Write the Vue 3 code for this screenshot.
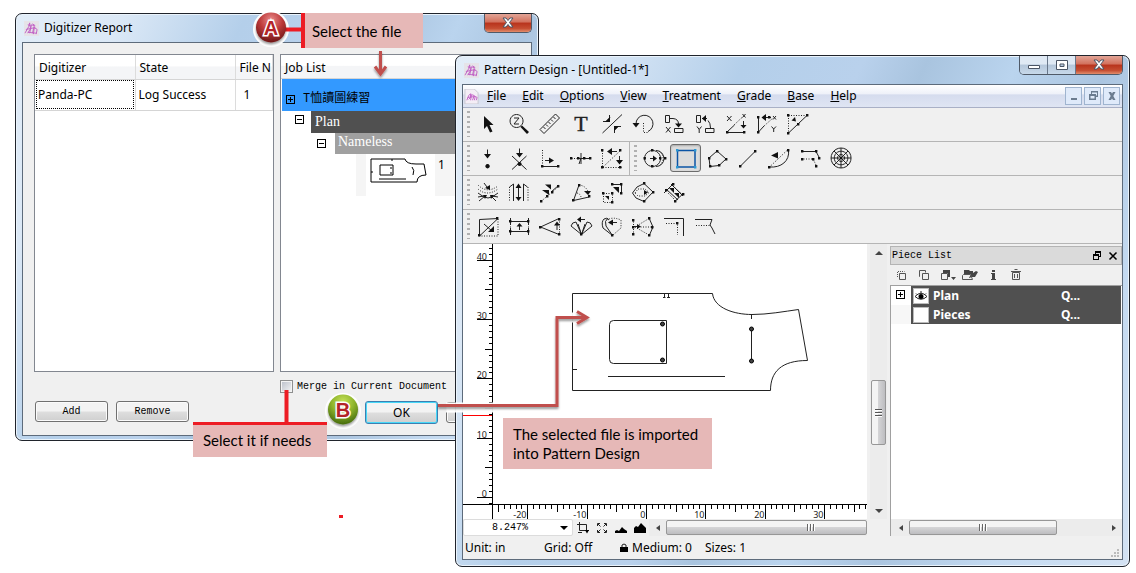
<script setup>
const dot = (x, y) => `M${x - 1} ${y - 1}h2.4v2.4h-2.4z`
const dots = (...points) => points.map(([x, y]) => dot(x, y)).join('')

/* Each glyph: s = solid strokes, d = dotted strokes, f = filled shapes, t = letters */
const glyphs = {
  select: { f: 'M8 4V17L11 14L14 20.5L16.500 19.500L13.500 13H17.500Z' },
  zoom: { s: 'M9.500 2.500a6.500 6.500 0 1 0 .1 0zM7 6h5L7 12h5', f: 'M13.500 15L15 13.500L22 20L20 22Z' },
  ruler: { s: 'M2 17.500L17.500 2L21.500 6L6 21.500ZM5.500 15l2 2M8 12.500l2 2M10.500 10l2 2M13 7.500l2 2M15.500 5l2 2' },
  text: { t: [['T', 12, 19, 22]] },
  corners: { s: 'M2.500 21L22 2.500M3 9.500H9.500V3M14.500 21V14.500H21M6 9.500l4-4M14.500 18l4-4', f: 'M5 10L10 5V10ZM14 14h5l-5 5Z' },
  rotate: { s: 'M5 12A8.500 8.500 0 1 1 17 19.500', d: 'M12.500 11V20.500H17', f: 'M1.500 11H8.500L5 15.500Z' },
  flipX: { s: 'M3.500 3.500h4v7h-4zM8 6.500h3Q16.500 7 16.500 12M12.500 16.500h8.500v4h-8.500zM4 15l4.500 5.500M8.500 15L4 20.500', f: 'M13 11.500h7L16.500 15.500Z' },
  flipY: { s: 'M3.500 3.500h4v7h-4zM9 6.500h5M15 8.500Q17.500 11 17.500 16M12.500 16.500h8.500v4h-8.500zM4 14.500l2.200 3M8.500 14.500L6.200 17.500V21', f: 'M9 6.500l4-3.500v7z' },
  scaleX: { s: 'M3 20.500H20M3 4l4.500 5M7.500 4L3 9M19.500 9V14M18.500 2l3 3.500M21.500 2l-3 3.500M3 20L10.500 13', d: 'M10 13L18 5.500', f: dots([3, 20], [20, 20]) + 'M16.500 13h6L19.500 16.500Z' },
  scaleY: { s: 'M3.500 5V20M7 5.500H16M16.500 14.500l2.200 2.500M21 14.500l-2.300 2.500V20M18 4l3 3.500M21 4l-3 3.500M3.500 20L9 14', d: 'M9 14L18 6', f: dots([3, 5], [3, 20], [14, 5]) + 'M6.500 5.500l4.500-3.500v7z' },
  scaleXY: { s: 'M2.500 21L21.500 3', d: 'M2.500 3.500H21M2.500 3.500V21', f: dots([2, 3], [21, 3], [2, 21], [12, 12]) + 'M10 9.500L5.500 8.500L9 5Z' },
  point: { s: 'M11.500 3.500V9', f: 'M8 8h7l-3.500 4.500zM11.500 18a2.200 2.200 0 1 0 .1 0z' },
  cross: { s: 'M12.500 2.500V8M5 10L19.500 23.500M19.500 10L5 23.500', f: 'M9 7h7l-3.500 4.500zM12.500 16a2 2 0 1 0 .1 0z' },
  axis: { s: 'M4.500 20.500H21M7 14.500h5', d: 'M4.500 4V20', f: dots([4, 20], [20, 20]) + 'M11 11.500v6l5-3z' },
  divide: { s: 'M9 12.500H22M10 18Q13 12 12 7M12 12v6', d: 'M2.500 12.500H9', f: dots([2, 12], [9, 12], [15, 12], [21, 12]) },
  box: { s: 'M9 5.500h8M19.500 10v5', d: 'M2.500 4.500V21.500H21.500M3 21L21 4', f: dots([2, 4], [2, 21], [20, 21], [20, 4]) + 'M7 5.500l5-3.500v7zM16 14h7l-3.500 4.500z' },
  circle: { s: 'M9.500 4.500a8 8 0 1 0 .1 0zM13 4.500A8 8 0 0 1 13 20.500M7 12.500h4', d: 'M16 5A9 9 0 0 1 16 20', f: dots([9, 4], [9, 20], [1.500, 12], [17, 12], [22, 12]) + 'M10 9.500v6l4-3z' },
  rect: { s: 'M3.500 4.500H21V21H3.500Z', f: dots([3, 4], [21, 4], [3, 21], [21, 21]), c: 'blue' },
  polygon: { s: 'M4 12L12 5L21 13L14 19.500L5 20.500Z', f: dots([4, 12], [12, 5], [21, 13], [14, 19], [5, 20]) },
  line: { s: 'M4 20.500L19.500 5', f: dots([4, 20], [19, 5]) },
  curve: { s: 'M2.500 21C14 22 23 15 21.500 4', d: 'M2.500 21L21 3.500', f: dots([2, 21], [21, 4]) + 'M4 9.500L11 6V12.500Z' },
  parallel: { s: 'M4 5.500H18L21.500 12', d: 'M3 13H15L18.500 20', f: dots([4, 5], [18, 5], [21, 12], [4, 13], [15, 13], [18, 20]) },
  spiral: { s: 'M12 2a10 10 0 1 0 .1 0zM12 5.200a6.800 6.800 0 1 0 .1 0zM12 8.500a3.500 3.500 0 1 0 .1 0zM12 2V22M2 12H22M5 5L19 19M19 5L5 19', f: 'M11 11h2v2h-2z' },
  spread: { s: 'M2 13Q8 18 12 18T22 13M8 3l3 4M3 21l6-5M20 21l-5-5M2 17l6-1M22 17l-6-1', d: 'M2 5Q11 14 22 6M2 9Q11 17 22 9', f: 'M9 8l5-3v5zM7 15h4l-2 4zM14 15h4l-3 4z' },
  pleats: { s: 'M11.500 5V20M6.500 4V21M16.500 4V21M2.500 7l4-3M16.500 4l4 3', d: 'M2.500 7V22M21 7V22', f: 'M8.500 8h6l-3-4.500zM8.500 17h6l-3 4z' },
  notch: { s: 'M13 12l8-7', d: 'M3.500 21L20 7', f: dots([3, 21], [9, 16], [14, 12], [20, 6]) + 'M7 4.500h6v5zM4 10h7v5z' },
  dart: { s: 'M4.500 20.500L10 5M4.500 20.500L20 17', d: 'M10 5Q19 6 20 16M8 13q4 1 4 5', f: dots([4, 20], [10, 5], [20, 16]) + 'M15 11h7l-3 4z' },
  move: { s: 'M12 4.500H21.500V13', d: 'M3.500 13.500h9v9h-9z', f: dots([3, 13], [12, 13], [12, 22], [12, 4], [21, 4], [21, 13]) + 'M13 7h6v6zM5 16h4v4z' },
  contour: { s: 'M1.500 13L6 7L13 3.500L22 12L13 21.500L5 18Z', d: 'M4 13L7 9H14L18 12.500L14 16H7Z', f: dots([13, 3], [22, 12], [13, 21]) + 'M13 10v5l4-2.500z' },
  hatch: { s: 'M2 13L12 3M12 22L22 13M4 9L16 20M9 4L21 16', d: 'M6 13l7 7M11 6l9 8', f: dots([4, 10], [11, 4], [21, 14], [13, 21]) + 'M7 8h5v5zM12 13h5v5z' },
  square: { s: 'M3.500 22V5.500L22 4.500M3.500 22L22 4.500M8 10l8 7', d: 'M22 5V22H4', f: 'M12 18h6v-6z' + dots([3, 21], [21, 4]) },
  width: { s: 'M3 7.500H22M3 17.500H22M3.500 4v6M21.500 4v6M3.500 14v7M21.500 14v7M12.500 12v4', d: 'M3.500 10v4M21.500 10v4', f: dots([3, 7], [21, 7], [3, 17], [21, 17]) + 'M9.500 12.500h6l-3-3.500z' },
  cone: { s: 'M2.500 13L21 4.500M2.500 13L21 20.500M19 10v6', d: 'M21.500 5V20.500', f: dots([2, 13], [21, 5], [21, 20]) + 'M16 11.500h6l-3-4z' },
  fan: { s: 'M12.500 20.500L2 12Q3 8 7 8L12.500 20.500L18 8Q22 8 23 12ZM12.500 20.500L9 10M12.500 20.500L16 10M10 5.500h6', f: dots([12, 20]) + 'M8 5.500l4-3v6z' },
  petal: { s: 'M12.500 21.500L3 14Q1 8 4 5Q7 3 9 6M12.500 21.500L6 12Q4 7 8 4M11 8.500h6', d: 'M9 5Q14 3 21 6V14L13 21', f: dots([12, 21]) + 'M8 8.500l5-3v6z' },
  mirror: { s: 'M18 4L22 13L18 22M3 12.500h3', d: 'M2.500 5V21M4 13L18 4.500M4 13L18 21M7 13H21', f: dots([2, 6], [2, 13], [2, 20], [18, 4], [21, 13], [18, 21]) + 'M6 10v5l4-2.500z' },
  seam: { s: 'M2 4.500H21.500V22', d: 'M4 9.500H15.500V21', f: dots([15, 9]) },
  edge: { s: 'M2 5.500H19L17 11L19 14L22 20', d: 'M3 11.500H17' },
}

const rows = [
  [['select', 'zoom', 'ruler', 'text', 'corners', 'rotate', 'flipX', 'flipY', 'scaleX', 'scaleY', 'scaleXY']],
  [['point', 'cross', 'axis', 'divide', 'box'], ['circle', 'rect', 'polygon', 'line', 'curve', 'parallel', 'spiral']],
  [['spread', 'pleats', 'notch', 'dart', 'move', 'contour', 'hatch']],
  [['square', 'width', 'cone', 'fan', 'petal', 'mirror', 'seam', 'edge']],
]

const menus = ['File', 'Edit', 'Options', 'View', 'Treatment', 'Grade', 'Base', 'Help']

/* Ruler ticks: one per inch, longer at 5, labelled at 10 */
const unit = 5.93
const vTicks = []
for (let v = -1; v <= 42; v++) vTicks.push({ v, y: Math.round(252 - v * unit) + 0.5 })
const hTicks = []
for (let v = -25; v <= 140; v++) hTicks.push({ v, x: Math.round(183 + v * unit) + 0.5 })
const hLabels = hTicks.filter((t) => t.v % 10 === 0 && t.v < 40)
const tick = (v, one, five, ten) => (v % 10 === 0 ? ten : v % 5 === 0 ? five : one)
</script>

<template>
  <main class="desktop">
    <section class="win digitizer">
      <header class="title">
        <svg class="logo" viewBox="0 0 16 16"><rect width="16" height="16" fill="#e6e3e8" /><path d="M1 13l4-7 1-4 1 6-3 5M6 13l2-9 3 1-2 8M10 14l1-7 3 2-1 5M2 9l10-2M4 12l9 1M4 4l3 1M9 3l3 2" /></svg>
        <h1>Digitizer Report</h1>
        <div class="caption"><button class="close" aria-label="Close"><svg viewBox="0 0 14 12"><path d="M2 1h3l2 2.500 2-2.500h3l-3.500 4.500 3.500 4.500h-3l-2-2.500-2 2.500h-3l3.500-4.500z" /></svg></button></div>
      </header>
      <div class="client report">
        <div class="panel">
          <table>
            <thead><tr><th>Digitizer</th><th>State</th><th>File N</th></tr></thead>
            <tbody><tr><td class="focus">Panda-PC</td><td>Log Success</td><td class="num">1</td></tr></tbody>
          </table>
        </div>
        <div class="panel jobs">
          <div class="jobhead">Job List</div>
          <div class="job file"><i class="exp plus"></i><span>T恤讀圖練習</span></div>
          <div class="job plan"><i class="exp"></i><span>Plan</span></div>
          <div class="job size"><i class="exp"></i><span>Nameless</span></div>
          <div class="job piece">
            <svg viewBox="0 0 58 26"><path d="M1 1H35Q36 6 46 6H54L56 17Q47 17 47 24H1ZM10 7H23V17H10ZM9 21H36M42 9Q45 12 43 17M22 1v2M1 14h2M21 9v2M21 14v2" /></svg>
            <span>1</span>
          </div>
        </div>
        <div class="buttons left"><button>Add</button><button>Remove</button></div>
        <div class="confirm">
          <label><input type="checkbox" />Merge in Current Document</label>
          <div class="buttons right"><button class="ok">OK</button><button aria-label="Cancel"></button></div>
        </div>
      </div>
    </section>

    <section class="win pattern">
      <header class="title">
        <svg class="logo" viewBox="0 0 16 16"><rect width="16" height="16" fill="#e6e3e8" /><path d="M1 13l4-7 1-4 1 6-3 5M6 13l2-9 3 1-2 8M10 14l1-7 3 2-1 5M2 9l10-2M4 12l9 1M4 4l3 1M9 3l3 2" /></svg>
        <h1>Pattern Design - [Untitled-1*]</h1>
        <div class="caption">
          <button aria-label="Minimize"><svg viewBox="0 0 14 12"><path d="M1.500 6.500h11v3h-11z" /></svg></button>
          <button aria-label="Maximize"><svg viewBox="0 0 14 12"><path fill-rule="evenodd" d="M1.500 1.500h11v9h-11zM5 5h4v2.500h-4z" /></svg></button>
          <button class="close" aria-label="Close"><svg viewBox="0 0 14 12"><path d="M2 1h3l2 2.500 2-2.500h3l-3.500 4.500 3.500 4.500h-3l-2-2.500-2 2.500h-3l3.500-4.500z" /></svg></button>
        </div>
      </header>
      <div class="client">
        <nav class="menubar">
          <svg class="logo doc" viewBox="0 0 16 16"><path class="sheet" d="M1 0h10l4 4v12H1z" /><path d="M3 12l2-5 2-2 0 4-2 2M7 12l1-6 3 1-2 5M11 12l1-4 2 1-1 3M4 9l8-1" /></svg>
          <button v-for="m in menus" :key="m"><u>{{ m[0] }}</u>{{ m.slice(1) }}</button>
          <div class="mdi">
            <button aria-label="Minimize document"><svg viewBox="0 0 12 12"><path d="M3 8h6v2H3z" /></svg></button>
            <button aria-label="Restore document"><svg viewBox="0 0 12 12"><path fill-rule="evenodd" d="M4 1h7v6H9v3H2V4h2zM5 2.500V4h4v1.500h1v-3zM3.500 6v2.500h4V6z" /></svg></button>
            <button aria-label="Close document"><svg viewBox="0 0 12 12"><path d="M2.500 2h2.500l1 1.500 1-1.500h2.500l-2.200 4 2.200 4h-2.500l-1-1.500-1 1.500h-2.500l2.200-4z" /></svg></button>
          </div>
        </nav>
        <div v-for="(bars, r) in rows" :key="r" class="toolrow">
          <div v-for="(bar, b) in bars" :key="b" class="toolbar">
            <i class="grip"></i>
            <button v-for="name in bar" :key="name" :aria-label="name" :class="{ active: name === 'rect' }">
              <svg viewBox="0 0 24 24" :class="glyphs[name].c">
                <path v-if="glyphs[name].d" class="d" :d="glyphs[name].d" />
                <path v-if="glyphs[name].s" class="s" :d="glyphs[name].s" />
                <path v-if="glyphs[name].f" class="f" :d="glyphs[name].f" />
                <text v-for="t in glyphs[name].t" :key="t[0]" :x="t[1]" :y="t[2]" :font-size="t[3]" text-anchor="middle">{{ t[0] }}</text>
              </svg>
            </button>
          </div>
        </div>

        <div class="work">
          <div class="view">
            <svg class="canvas">
              <g transform="translate(0 1)">
                <path class="axis" d="M29.500 -1V260" />
                <g v-for="t in vTicks" :key="t.v">
                  <path class="axis" :d="`M${tick(t.v, 26, 22, 14)} ${t.y}H30`" />
                  <text v-if="t.v % 10 === 0" x="24" :y="t.y - 1" text-anchor="end">{{ t.v }}</text>
                </g>
                <path class="red" d="M0 170.500H29" />
                <g class="garment">
                  <path d="M109.500 48.500H249.500C251 63 271 69.500 289 69.500C305 69.500 321 66.500 335.500 64.500L344.500 115.500C318 115.500 307.500 127 307.500 145.500H109.500Z" />
                  <path d="M150.500 75.500H203.500V118.500H150.500Q146.500 118.500 146.500 114.500V79.500Q146.500 75.500 150.500 75.500ZM145 131.500H262M288.500 84V116M201.500 49v4M205.500 49v4M200 52.500h2.500M204 52.500h3M288.500 70v4M110 124.500h4" />
                  <circle cx="199.500" cy="79" r="2" /><circle cx="199.500" cy="115" r="2" />
                  <circle cx="288.500" cy="84" r="2" /><circle cx="288.500" cy="116" r="2" />
                </g>
              </g>
            </svg>
            <svg class="hruler">
              <path class="axis" d="M29.500 0V15" />
              <path v-for="t in hTicks" :key="t.v" class="axis" :d="`M${t.x} 0V${tick(t.v, 4, 7, 15)}`" />
              <text v-for="t in hLabels" :key="t.v" :x="t.x - 1" y="13" text-anchor="end">{{ t.v }}</text>
            </svg>
            <div class="viewbar">
              <div class="combo">
                <select aria-label="Zoom level"><option>8.247%</option></select>
                <svg viewBox="0 0 8 4"><path d="M0 0h8L4 4z" /></svg>
              </div>
              <button aria-label="Crop"><svg viewBox="0 0 12 12"><path class="s" d="M0 2.500H9.500V9M2.500 0V8.500H12M1 10.500h4" /><path d="M8 8h4l-2 3.500z" /></svg></button>
              <button aria-label="Fit"><svg viewBox="0 0 12 12"><path class="s" d="M1.500 4V1.500H4M8 1.500h2.500V4M10.500 8v2.500H8M4 10.500H1.500V8M2 2l2.500 2.500M10 2L7.500 4.500M10 10L7.500 7.500M2 10l2.500-2.500" /></svg></button>
              <button aria-label="Zoom out"><svg viewBox="0 0 12 12"><path d="M0 11V9l2-1 2 1 3-4 2 2 3 2v2z" /></svg></button>
              <button aria-label="Zoom in"><svg viewBox="0 0 12 12"><path d="M0 11V6l2-2 2 1 3-4 3 3 2 2v5z" /></svg></button>
              <div class="hbar"><i class="tri l"></i><div class="thumb grow"><i class="ridges wide"></i></div></div>
            </div>
          </div>
          <div class="vbar"><i class="tri u"></i><div class="thumb"><i class="ridges"></i></div><i class="tri n"></i></div>
          <aside class="dock">
            <div class="dockhead">
              <span>Piece List</span>
              <button aria-label="Float panel"><svg viewBox="0 0 10 10"><path fill-rule="evenodd" d="M3 0h6v6H7v3H1V3h2zM4 2v1h3v2h1V2zM2 5v3h4V5z" /></svg></button>
              <button aria-label="Close panel"><svg viewBox="0 0 10 10"><path class="s" d="M1.500 1.500l7 7M8.500 1.500l-7 7" /></svg></button>
            </div>
            <div class="docktools">
              <button aria-label="Group"><svg viewBox="0 0 16 12"><path class="s" d="M6.500 4.500h6v6h-6z" /><path class="s" d="M4.500 8V2.500h7" stroke-dasharray="1 1" /></svg></button>
              <button aria-label="Copy"><svg viewBox="0 0 16 12"><path class="s" d="M6.500 4.500h6v6h-6zM4 7.500h-.5v-6h6v2" /></svg></button>
              <button aria-label="Arrange"><svg viewBox="0 0 16 12"><path d="M4 1h7v7h-2V4H4zM12 8h5l-2.500 3z" /><path class="s" d="M2.500 4.500h6v6h-6z" /></svg></button>
              <button aria-label="Insert"><svg viewBox="0 0 16 12"><path d="M2 1h5l1 1h3v2l3-2 2 1-3 5H9l-1 1H7l2-4H2z" /><path class="s" d="M1.500 5.500h7l2 5h-10v-4z" /></svg></button>
              <button aria-label="Info"><svg viewBox="0 0 16 12"><path d="M7 1h3v2H7zM6 4h4v6h1v1H6v-1h1V5H6z" /></svg></button>
              <button aria-label="Delete"><svg viewBox="0 0 16 12"><path class="s" d="M4.500 3.500h7v7h-7zM3 2.500h10M6.500 .5h3M6.500 5v4M9.500 5v4" /></svg></button>
            </div>
            <div class="pieces">
              <div class="prow">
                <div class="tree"><i class="exp plus"></i></div>
                <div class="pcell"><i class="eye"><svg viewBox="0 0 14 10"><path class="s" d="M1 5.500Q7 -1 13 5.500Q7 11 1 5.500ZM2 2.500l1 1M7 0v2M12 2.500l-1 1" /><circle cx="7" cy="5.500" r="2.500" /></svg></i><b>Plan</b><b>Q...</b></div>
              </div>
              <div class="prow second">
                <div class="tree"></div>
                <div class="pcell"><i class="eye"></i><b>Pieces</b><b>Q...</b></div>
              </div>
            </div>
            <div class="hbar"><i class="tri l"></i><div class="thumb"><i class="ridges wide"></i></div><span></span><i class="tri r"></i></div>
          </aside>
        </div>
        <footer class="status">
          <span class="unit">Unit: in</span><span class="grid">Grid: Off</span>
          <svg viewBox="0 0 8 10"><path d="M0 4h8v5H0z" /><path class="s" d="M2 4V2Q4 0 6 2V4" /></svg>
          <span>Medium: 0</span><span class="sizes">Sizes: 1</span>
          <svg class="sizer" viewBox="0 0 10 10"><path d="M7 1h2v2H7zM4 4h2v2H4zM7 4h2v2H7zM1 7h2v2H1zM4 7h2v2H4zM7 7h2v2H7z" /></svg>
        </footer>
      </div>
    </section>

    <svg class="marks">
      <defs>
        <radialGradient id="redBall" cx="50%" cy="25%" r="75%"><stop offset="0" stop-color="#e98a8a" /><stop offset=".5" stop-color="#bd3a3a" /><stop offset="1" stop-color="#6e1616" /></radialGradient>
        <radialGradient id="greenBall" cx="50%" cy="25%" r="75%"><stop offset="0" stop-color="#c6e25a" /><stop offset=".5" stop-color="#8fb52c" /><stop offset="1" stop-color="#456b0c" /></radialGradient>
        <filter id="soft" x="-20%" y="-20%" width="140%" height="150%"><feDropShadow dx="0" dy="2" stdDeviation="1" flood-opacity=".4" /></filter>
      </defs>
      <circle cx="271" cy="29" r="18" fill="#fff" />
      <path class="bright" d="M284 29.500H302" />
      <circle cx="271" cy="27.500" r="15" fill="url(#redBall)" filter="url(#soft)" />
      <text class="ball" x="271" y="35">A</text>
      <path class="halo" d="M446 407.500H557V317.500H580" />
      <path class="flow" filter="url(#soft)" d="M438 405.500H557V317.500H586M577 311.500L587 317.500L577 323.500" />
      <path class="bright" d="M286.500 390V423" />
      <circle cx="343" cy="411" r="18" fill="#fff" />
      <circle cx="343" cy="409.500" r="15" fill="url(#greenBall)" filter="url(#soft)" />
      <text class="ball" x="343" y="417">B</text>
      <path class="flow thin" filter="url(#soft)" d="M380.500 51V73M375 66.500L380.500 74L386 66.500" />
      <path fill="#ed1c24" d="M339 515h4v3h-4z" />
    </svg>
    <p class="note a">Select the file</p>
    <p class="note b">Select it if needs</p>
    <p class="note c">The selected file is imported<br />into Pattern Design</p>
  </main>
</template>

<style>
body { margin: 0; background: #fff; }
</style>

<style scoped>
* { box-sizing: border-box; }
.desktop { position: relative; min-height: 100vh; overflow: hidden; font: 12px/16px "Noto Sans", "Open Sans", "Noto Sans CJK TC", sans-serif; color: #000; }
button { font: inherit; color: inherit; padding: 0; margin: 0; border: 0; background: none; }
svg { display: block; flex: none; }
.win { position: absolute; display: flex; flex-direction: column; padding: 0 6px 6px; border: 1px solid #20242c; border-radius: 7px; background: linear-gradient(115deg, #e2edf8 0, #dbe8f6 15%, #b4cfea 32%, #b9d1ec 45%, #a9c4df 52%, #bad4ee 62%, #abc5e0 72%, #c4daf1 85%, #d3e2f3 100%); box-shadow: inset 0 0 0 1px #eaf3fb; }
.digitizer { left: 15px; top: 13px; width: 524px; height: 428px; }
.pattern { left: 455px; right: 6px; top: 55px; }
.title { display: flex; gap: 5px; height: 28px; padding-left: 2px; flex: none; }
.logo { width: 15px; height: 15px; margin-top: 7px; }
.logo path { fill: none; stroke: #c05fc4; stroke-width: 1; }
.logo .sheet { fill: #f4eef6; stroke: #c8c8d0; }
.title h1 { flex: 1; margin: 6px 0 0; font-size: 12px; line-height: 16px; font-weight: 400; }
.caption { display: flex; height: 19px; border: 1px solid #505a68; border-top: 0; border-radius: 0 0 5px 5px; overflow: hidden; }
.caption button { width: 28px; display: grid; place-items: center; background: linear-gradient(#dfe9f4 45%, #b4c6da 50%, #c8d9ea); border-right: 1px solid #68778a; }
.caption .close { width: 46px; border: 0; background: linear-gradient(#e2a597 0, #d2705c 45%, #b8331c 50%, #c54d31 80%, #e28d6c); }
.caption svg { width: 14px; height: 12px; }
.caption path { fill: #fff; stroke: #4b5565; stroke-width: 1; }
.client { flex: 1; border: 1px solid #5d6b7b; background: #f0f0f0; display: flex; flex-direction: column; }

.report { display: grid; grid-template: 318px 1fr / 240px 240px; gap: 7px 6px; padding: 11px; }
.panel { border: 1px solid #828790; background: #fff; overflow: hidden; }
table { width: 100%; border-collapse: collapse; table-layout: fixed; }
th, td { padding: 0 0 0 4px; text-align: left; font-weight: 400; white-space: nowrap; overflow: hidden; border-right: 1px solid #dcdcdc; border-bottom: 1px solid #d5d5d5; }
th:nth-child(1), th:nth-child(2) { width: 100px; }
th, .jobhead { height: 24px; background: linear-gradient(#fff 45%, #f4f5f7 50%, #f4f5f7); }
th { padding-top: 2px; }
td { height: 31px; padding-left: 3px; }
td.num { padding-left: 8px; }
td.focus { outline: 1px dotted #000; outline-offset: -2px; }
.jobhead { padding: 5px 4px 0; border-bottom: 1px solid #d5d5d5; }
.job { display: flex; align-items: center; }
.exp { display: block; flex: none; width: 9px; height: 9px; border: 1px solid #000; background: linear-gradient(#000, #000) center / 5px 1px no-repeat #fff; }
.exp.plus { background: linear-gradient(#000, #000) center / 5px 1px no-repeat, linear-gradient(#000, #000) center / 1px 5px no-repeat #fff; }
.file { height: 32px; margin-left: 1px; padding: 3px 0 0 4px; gap: 8px; background: #3399ff; font: 12px "Liberation Mono", "Noto Sans CJK TC", monospace; }
.file .exp { margin-top: 6px; background-color: #3399ff; }
.plan { height: 22px; padding-left: 14px; gap: 7px; }
.size { height: 21px; padding-left: 36px; gap: 9px; }
.plan span, .size span { flex: 1; padding-left: 4px; color: #fff; font: 14px/22px "Liberation Serif", serif; background: #505050; }
.size span { padding-left: 3px; line-height: 20px; height: 21px; line-height: 18px; background: #a0a0a0; }
.plan .exp { margin-bottom: 6px; }
.piece { align-items: flex-start; height: 42px; margin-left: 75px; padding: 3px 0 0 4px; border-left: 10px solid #f5f5f5; gap: 10px; background: linear-gradient(90deg, #fff 69px, #f5f5f5 69px); }
.piece svg { width: 58px; height: 26px; margin-top: 1px; }
.piece path { fill: none; stroke: #000; }
.buttons { display: flex; gap: 8px; font: 10px "Liberation Mono", monospace; }
.buttons button { width: 73px; height: 21px; border: 1px solid #707070; border-radius: 3px; background: linear-gradient(#f3f3f3 48%, #dedede 52%, #cfcfcf); box-shadow: inset 0 0 0 1px #fbfbfb; }
.buttons .ok { height: 23px; font: 12px "Noto Sans", sans-serif; border: 1px solid #3c7fb1; box-shadow: inset 0 0 0 1px #47d8f8; }
.left { padding: 22px 0 0 1px; }
.right { padding-left: 85px; align-items: center; }
.confirm { display: flex; flex-direction: column; gap: 8px; overflow: hidden; }
label { display: flex; align-items: center; gap: 4px; height: 14px; font: 10px "Liberation Mono", monospace; }
input { appearance: none; width: 13px; height: 13px; margin: 0; border: 1px solid #8e8f8f; background: linear-gradient(135deg, #b9bfc9, #f6f6f6); box-shadow: inset 0 0 0 1px #f4f4f4; }

.menubar { display: flex; align-items: center; height: 23px; padding: 0 2px 0 1px; gap: 16px; border-bottom: 1px solid #a9b0c6; background: linear-gradient(#fff, #eef1f9 40%, #d5dcee 45%, #dfe5f3); }
.menubar .logo { margin: 0 -8px 0 0; height: 15px; }
.mdi { display: flex; gap: 2px; margin-left: auto; }
.mdi button { width: 17px; height: 18px; display: grid; place-items: center; border: 1px solid #9fb4cf; background: #dfeafa; }
.mdi svg { width: 12px; height: 12px; fill: #6b7c90; }
.toolrow { display: flex; height: 34px; border-bottom: 1px solid #b5b5b5; }
.toolbar { display: flex; align-items: center; padding: 0 2px 1px 4px; }
.toolbar + .toolbar { border-left: 1px solid #b5b5b5; }
.toolbar:last-child { flex: 1; }
.grip { width: 3px; height: 26px; margin-right: 2px; background: repeating-linear-gradient(#b0b0b0 0 2px, transparent 2px 5px); }
.toolbar button { width: 31px; height: 28px; display: grid; place-items: center; }
.toolbar button.active { border: 1px solid #6c6c6c; border-radius: 3px; background: #dcdcdc; box-shadow: inset 0 1px 2px #aaa; }
.toolbar svg { width: 24px; height: 24px; font-family: "Liberation Serif", serif; fill: #222; }
.toolbar text { stroke: #222; stroke-width: .4; }
.s { fill: none; stroke: #222; }
.d { fill: none; stroke: #222; stroke-dasharray: 1 1.500; }
.f { fill: #111; }
.blue .s { stroke: #0b54a5; stroke-width: 1.500; }
.blue .f { fill: #2b9ad4; }

.work { display: grid; grid-template-columns: 1fr 17px 232px; column-gap: 3px; height: 292px; }
.view { display: flex; flex-direction: column; min-width: 0; }
.canvas { width: 100%; height: 260px; background: #fff; }
.hruler { width: 100%; height: 15px; background: #fff; border-top: 1px solid #000; }
.canvas text, .hruler text { font: 9px "Noto Sans", sans-serif; fill: #222; }
.axis { fill: none; stroke: #000; }
.red { stroke: #f00; }
.garment path { fill: none; stroke: #222; }
.garment circle { fill: #444; stroke: #000; }
.viewbar { display: flex; flex: 1; align-items: center; }
.combo { display: grid; align-items: center; width: 110px; height: 17px; border: 1px solid #dcdcdc; background: #fff; border-radius: 2px; }
.combo select { grid-area: 1 / 1; height: 15px; appearance: none; border: 0; padding: 0 0 0 28px; background: none; font: 10px/15px "Liberation Mono", monospace; color: #000; }
.combo svg { grid-area: 1 / 1; justify-self: end; width: 8px; height: 4px; margin-right: 4px; pointer-events: none; }
.viewbar > button { width: 19px; display: grid; place-items: center; }
.viewbar > button svg { width: 12px; height: 12px; }
.hbar { display: flex; align-items: center; height: 17px; background: #ececec; }
.hbar span { flex: 1; }
.viewbar .hbar { flex: 1; }
.tri { flex: none; width: 17px; height: 17px; display: grid; place-items: center; }
.tri::after { content: ""; border: 4px solid transparent; border-width: 3px 4px; }
.tri.l::after { border-width: 3px 4px 3px 0; border-right-color: #444; }
.tri.r::after { border-width: 3px 0 3px 4px; border-left-color: #444; }
.tri.u::after { border-width: 0 4px 4px; border-bottom-color: #444; }
.tri.n::after { border-width: 4px 4px 0; border-top-color: #444; }
.thumb { display: grid; place-items: center; height: 15px; border: 1px solid #979797; border-radius: 2px; background: linear-gradient(#f4f4f4 45%, #d4d4d6 50%, #bdbdc0); }
.hbar .thumb { width: 148px; }
.hbar .grow { width: auto; flex: 1; padding-left: 90px; }
.ridges { width: 7px; height: 8px; background: repeating-linear-gradient(#555 0 1px, #fff 1px 2px, transparent 2px 3px); }
.ridges.wide { width: 9px; height: 7px; background: repeating-linear-gradient(90deg, #666 0 1px, #fff 1px 2px, transparent 2px 3px); }
.vbar { display: flex; flex-direction: column; align-items: center; height: 275px; background: #ececec; }
.vbar .thumb { width: 15px; height: 65px; margin-top: 119px; margin-bottom: auto; background: linear-gradient(90deg, #f4f4f4 45%, #d4d4d6 50%, #bdbdc0); }
.dock { display: flex; flex-direction: column; min-width: 0; }
.dock .hbar { padding-left: 1px; border-left: 1px solid #a0a0a0; }
.dockhead { display: flex; align-items: center; gap: 6px; height: 19px; margin-top: 2px; padding: 0 3px 0 1px; border: 1px solid #b4b4b4; background: #dadada; font: 10px "Liberation Mono", monospace; }
.dockhead span { flex: 1; }
.dockhead svg { width: 10px; height: 10px; }
.dockhead .s { stroke: #000; stroke-width: 1.500; }
.docktools { display: flex; gap: 7px; height: 20px; padding-left: 3px; align-items: center; }
.docktools svg { width: 16px; height: 12px; overflow: visible; fill: #444; }
.docktools .s { stroke: #555; }
.pieces { flex: 1; border-left: 1px solid #a0a0a0; border-top: 1px solid #a0a0a0; background: #fff; }
.prow { display: grid; grid-template-columns: 20px 1fr; height: 19px; padding-right: 1px; }
.tree { padding: 4px 5px; }
.second .tree { background: #f7f7f7; }
.pcell { display: grid; grid-template-columns: 20px 128px 1fr; align-items: center; padding-left: 2px; background: #505050; color: #fff; }
.eye { display: grid; place-items: center; width: 16px; height: 16px; border: 1px solid #bbb; background: #fff; }
.eye svg { width: 14px; height: 10px; }
.status { display: flex; align-items: center; height: 23px; padding: 0 2px; }
.unit { width: 79px; }
.grid { width: 76px; }
.status svg { width: 8px; height: 10px; margin-right: 4px; }
.sizes { margin-left: 13px; }
.status .sizer { margin: 10px 0 0 auto; width: 10px; fill: #bbb; }

.marks { position: absolute; inset: 0; width: 100%; height: 100%; pointer-events: none; }
.bright { stroke: #ed1c24; stroke-width: 4; }
.halo { fill: none; stroke: #fff; stroke-width: 10; opacity: .95; }
.flow { fill: none; stroke: #c0504d; stroke-width: 3; }
.ball { font: 700 20px "Liberation Sans", sans-serif; fill: #b32428; stroke: #fff; stroke-width: 3; paint-order: stroke; text-anchor: middle; }
.note { position: absolute; margin: 0; background: #e6b8b7; font: 15px/19px Lato, sans-serif; white-space: nowrap; }
.a { left: 301px; top: 13px; width: 122px; height: 35px; padding: 9px 0 0 7px; border-left: 4px solid #ed1c24; }
.b { left: 193px; top: 422px; width: 134px; height: 35px; padding: 6px 0 0 10px; border-top: 3px solid #ed1c24; }
.c { left: 503px; top: 418px; width: 209px; height: 51px; padding: 7px 10px; }
</style>
